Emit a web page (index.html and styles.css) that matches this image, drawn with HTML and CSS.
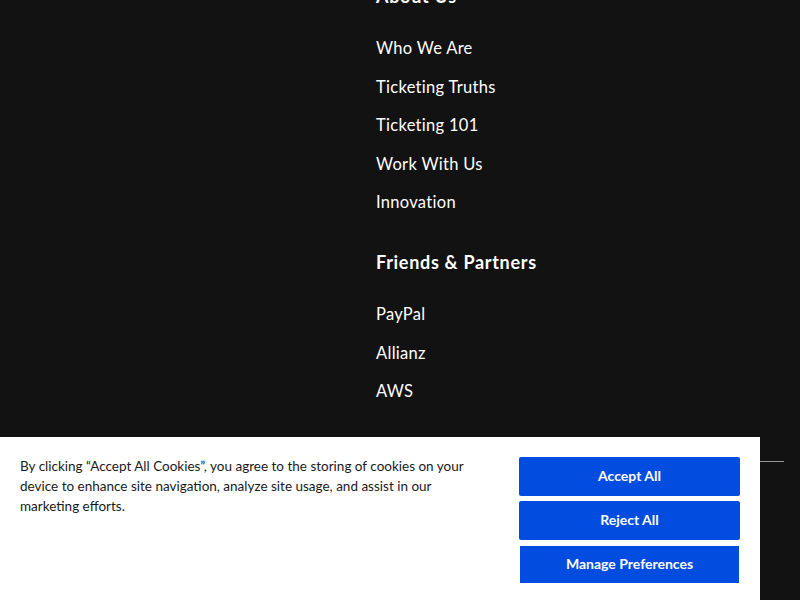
FILE: index.html
```html
<!DOCTYPE html>
<html lang="en">
<head>
<meta charset="utf-8">
<title>Footer</title>
<link rel="stylesheet" href="styles.css">
</head>
<body>
<footer class="footer">
  <div class="col">
    <section class="group">
      <h3 class="group-title">About Us</h3>
      <ul class="links">
        <li><a href="#">Who We Are</a></li>
        <li><a href="#">Ticketing Truths</a></li>
        <li><a href="#">Ticketing 101</a></li>
        <li><a href="#">Work With Us</a></li>
        <li><a href="#">Innovation</a></li>
      </ul>
    </section>
    <section class="group">
      <h3 class="group-title">Friends &amp; Partners</h3>
      <ul class="links">
        <li><a href="#">PayPal</a></li>
        <li><a href="#">Allianz</a></li>
        <li><a href="#">AWS</a></li>
      </ul>
    </section>
  </div>
  <hr class="divider">
</footer>
<div class="cookie-banner">
  <p class="cookie-text">By clicking “Accept All Cookies”, you agree to the storing of cookies on your device to enhance site navigation, analyze site usage, and assist in our marketing efforts.</p>
  <div class="cookie-actions">
    <button class="btn">Accept All</button>
    <button class="btn">Reject All</button>
    <button class="btn btn-manage">Manage Preferences</button>
  </div>
</div>
</body>
</html>
```

FILE: styles.css
```css
html, body {
  margin: 0;
  padding: 0;
  background: #121212;
  height: 100%;
  overflow: hidden;
}
body {
  font-family: Lato, "Noto Sans", sans-serif;
  color: #fff;
}
.footer {
  margin-top: -16px;
}
.col {
  margin-left: 376px;
}
.group-title {
  margin: 0;
  font-size: 18px;
  font-weight: 700;
  line-height: 24px;
  letter-spacing: 0.7px;
}
.links {
  list-style: none;
  margin: 0;
  padding: 29px 0 0;
}
.links li {
  height: 38.5px;
  line-height: 22px;
}
.links a {
  color: #fff;
  text-decoration: none;
  font-size: 16.5px;
  letter-spacing: 0.3px;
}
.group + .group {
  margin-top: 20.5px;
}
.divider {
  border: 0;
  border-top: 1px solid #9a9a9a;
  margin: 42px 16px 0;
}
.cookie-banner {
  position: fixed;
  left: 0;
  bottom: 0;
  width: 760px;
  height: 163px;
  background: #fff;
  box-sizing: border-box;
  padding: 20px 20px 0;
  display: flex;
  justify-content: space-between;
}
.cookie-text {
  margin: 0;
  width: 460px;
  font-size: 13.5px;
  line-height: 20px;
  color: #1a1a1a;
  margin-top: -1px;
}
.cookie-actions {
  width: 221px;
  display: flex;
  flex-direction: column;
  gap: 5px;
  align-items: stretch;
}
.btn {
  height: 39px;
  border: 0;
  border-radius: 2px;
  background: #024ddf;
  color: #fff;
  font-family: Lato, "Noto Sans", sans-serif;
  font-weight: 700;
  font-size: 14px;
  padding: 0 0 2px;
}
.btn-manage {
  margin: 1px 1px 0;
  height: 37px;
  border-radius: 0;
}
```
